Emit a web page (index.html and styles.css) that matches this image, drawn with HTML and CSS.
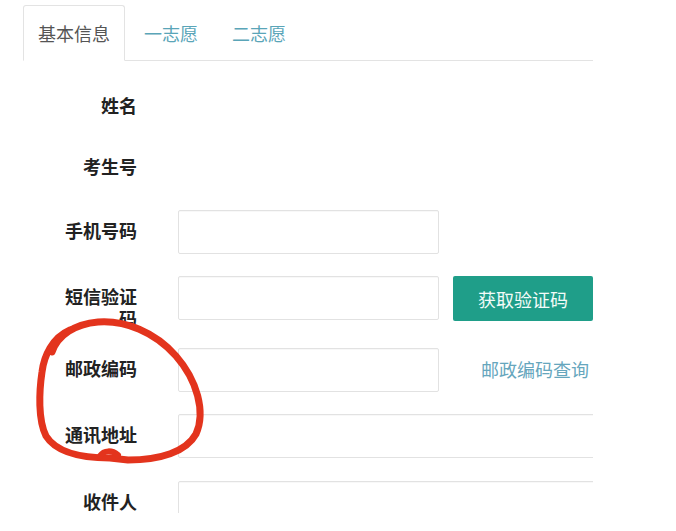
FILE: index.html
```html
<!DOCTYPE html>
<html lang="zh-CN">
<head>
<meta charset="utf-8">
<title>基本信息</title>
<link rel="stylesheet" href="styles.css">
</head>
<body>
<div class="page">
  <ul class="tabs">
    <li class="tab active">基本信息</li>
    <li class="tab">一志愿</li>
    <li class="tab">二志愿</li>
  </ul>
  <div class="form">
    <label class="label">姓名</label>
    <div class="field"></div>

    <label class="label">考生号</label>
    <div class="field"></div>

    <label class="label">手机号码</label>
    <div class="field"><input class="input" type="text"></div>

    <label class="label">短信验证码</label>
    <div class="field"><input class="input" type="text"><button class="btn">获取验证码</button></div>

    <label class="label">邮政编码</label>
    <div class="field"><input class="input" type="text"><a class="link">邮政编码查询</a></div>

    <label class="label">通讯地址</label>
    <div class="field"><input class="input wide" type="text"></div>

    <label class="label">收件人</label>
    <div class="field"><input class="input wide" type="text"></div>
  </div>
  <svg class="mark" width="676" height="531" viewBox="0 0 676 531">
    <path d="M52 352 C58 335 75 324 98 322 C125 320 155 332 176 356 C197 380 206 412 196 434 C186 452 160 460 128 460 L110 458 C80 458 56 452 46 436 C38 420 39 392 42 372 C44 356 52 338 70 330" fill="none" stroke="#e3341d" stroke-width="7" stroke-linecap="round" stroke-linejoin="round"/>
    <path d="M100 456 C104 450 112 450 118 455" fill="none" stroke="#e3341d" stroke-width="6" stroke-linecap="round"/>
  </svg>
</div>
</body>
</html>
```
FILE: styles.css
```css
* { box-sizing: border-box; }
html, body { margin: 0; padding: 0; background: #fff; }
body {
  font-family: "Noto Sans CJK SC", "Noto Sans", sans-serif;
  color: #222;
}
.page {
  position: relative;
  width: 593px;
  height: 513px;
  overflow: hidden;
  background: #fff;
}
.tabs {
  list-style: none;
  margin: 0 0 0 23px;
  padding: 5px 0 0 0;
  display: flex;
  border-bottom: 1px solid #e3e3e3;
}
.tab {
  height: 56px;
  line-height: 54px;
  padding: 0 14px;
  margin-right: 4px;
  margin-bottom: -1px;
  border: 1px solid transparent;
  border-radius: 3px 3px 0 0;
  font-size: 18px;
  color: #5aa5b8;
}
.tab.active {
  color: #555;
  background: #fff;
  border-color: #e3e3e3;
  border-bottom-color: #fff;
}
.form {
  margin-top: 24px;
  padding-left: 55px;
  display: grid;
  grid-template-columns: 82px 1fr;
  grid-template-rows: 61px 64px 66px 72px 66px 67px 44px;
  column-gap: 41px;
}
.label {
  padding-top: 9px;
  line-height: 22px;
  font-size: 18px;
  font-weight: bold;
  text-align: right;
  color: #222;
}
.field {
  display: flex;
  align-items: flex-start;
}
.input {
  width: 261px;
  height: 44px;
  flex: none;
  border: 1px solid #e2e2e2;
  border-radius: 2px;
  background: #fff;
  box-shadow: inset 0 1px 1px rgba(0,0,0,0.03);
}
.input.wide { width: 440px; }
.btn {
  margin-left: 14px;
  width: 140px;
  height: 45px;
  flex: none;
  border: none;
  border-radius: 2px;
  background: #1f9e89;
  color: #f2fbf8;
  font-family: inherit;
  font-size: 18px;
}
.link {
  margin-left: 42px;
  line-height: 42px;
  font-size: 18px;
  color: #66a6bd;
  white-space: nowrap;
}
.mark {
  position: absolute;
  left: 0;
  top: 0;
  pointer-events: none;
}
```
